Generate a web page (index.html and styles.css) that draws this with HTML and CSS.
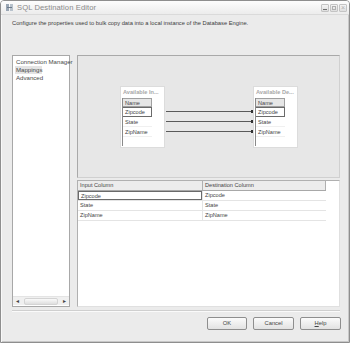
FILE: index.html
```html
<!DOCTYPE html>
<html>
<head>
<meta charset="utf-8">
<link rel="stylesheet" href="styles.css">
</head>
<body>
<div class="window">
  <div class="titlebar">
    <svg class="appicon" width="9" height="9" viewBox="0 0 9 9">
      <rect x="1" y="1" width="3" height="7" fill="#9aa6b4"/>
      <rect x="5" y="1" width="3" height="7" fill="#b8c2cc"/>
      <path d="M2 4.5h5" stroke="#6b7a8a" stroke-width="1"/>
    </svg>
    <span class="title">SQL Destination Editor</span>
    <div class="ctrls">
      <span class="ctrl"><i class="min"></i></span>
      <span class="ctrl"><i class="max"></i></span>
      <span class="ctrl x">×</span>
    </div>
  </div>
  <div class="desc">Configure the properties used to bulk copy data into a local instance of the Database Engine.</div>
  <div class="main">
    <div class="nav">
      <div class="navlist">
        <div class="navitem">Connection Manager</div>
        <div class="navitem sel">Mappings</div>
        <div class="navitem">Advanced</div>
      </div>
      <div class="hscroll">
        <span class="sbtn">&#9666;</span>
        <span class="strack"><span class="thumb"></span></span>
        <span class="sbtn">&#9656;</span>
      </div>
    </div>
    <div class="content">
      <div class="diagram">
        <div class="tbox">
          <div class="tname">Available In...</div>
          <div class="tlist">
            <div class="thead">Name</div>
            <div class="trow cur">Zipcode</div>
            <div class="trow">State</div>
            <div class="trow">ZipName</div>
          </div>
        </div>
        <div class="links">
          <div class="arrow"></div>
          <div class="arrow"></div>
          <div class="arrow"></div>
        </div>
        <div class="tbox">
          <div class="tname">Available De...</div>
          <div class="tlist">
            <div class="thead">Name</div>
            <div class="trow cur">Zipcode</div>
            <div class="trow">State</div>
            <div class="trow">ZipName</div>
          </div>
        </div>
      </div>
      <div class="grid">
        <div class="grow ghead">
          <div class="gcell">Input Column</div>
          <div class="gcell">Destination Column</div>
        </div>
        <div class="grow">
          <div class="gcell cur">Zipcode</div>
          <div class="gcell">Zipcode</div>
        </div>
        <div class="grow">
          <div class="gcell">State</div>
          <div class="gcell">State</div>
        </div>
        <div class="grow">
          <div class="gcell">ZipName</div>
          <div class="gcell">ZipName</div>
        </div>
      </div>
    </div>
  </div>
  <div class="sep"></div>
  <div class="buttons">
    <div class="btn">OK</div>
    <div class="btn">Cancel</div>
    <div class="btn"><u>H</u>elp</div>
  </div>
</div>
</body>
</html>
```
FILE: styles.css
```css
* { box-sizing: border-box; }
html, body { margin: 0; padding: 0; background: #ffffff; }
body {
  font-family: "Liberation Sans", Arial, sans-serif;
  color: #444;
  width: 350px;
  height: 343px;
  overflow: hidden;
}
.window {
  width: 350px;
  height: 343px;
  border: 1px solid #8e8e8e;
  border-radius: 4px 4px 0 0;
  background: #ebebeb;
  display: flex;
  flex-direction: column;
  box-shadow: inset 1px 1px 0 #f8f8f8, inset -1px -1px 0 #c8c8c8;
}
.titlebar {
  height: 14px;
  display: flex;
  align-items: center;
  padding: 0 2px 0 4px;
  background: linear-gradient(#fdfdfd, #ececec);
  border-bottom: 1px solid #dadada;
  border-radius: 3px 3px 0 0;
}
.appicon { display: block; margin-right: 3px; }
.title {
  font-size: 7.6px;
  color: #8a8a8a;
  letter-spacing: 0.1px;
}
.ctrls { margin-left: auto; display: flex; gap: 1px; }
.ctrl {
  width: 8px;
  height: 8px;
  border: 1px solid #c4c4c4;
  border-radius: 1px;
  background: linear-gradient(#f4f4f4, #dedede);
  display: flex;
  align-items: center;
  justify-content: center;
  font-size: 7px;
  line-height: 1;
  color: #b0b0b0;
}
.ctrl .min { display: block; width: 4px; height: 1px; background: #707070; margin-top: 3px; }
.ctrl .max { display: block; width: 4px; height: 4px; border: 1px solid #b0b0b0; }
.desc {
  height: 40px;
  padding: 5px 0 0 11px;
  font-size: 5.75px;
  color: #3c3c3c;
}
.main {
  height: 252px;
  display: flex;
  gap: 7px;
  padding: 0 9px 0 11px;
}
.nav {
  width: 58px;
  border: 1px solid #a8a8a8;
  background: #ffffff;
  display: flex;
  flex-direction: column;
}
.navlist { flex: 1; padding: 2px 0 0 2px; }
.navitem {
  font-size: 6.1px;
  height: 8px;
  line-height: 8px;
  padding-left: 1px;
  color: #4a4a4a;
  white-space: nowrap;
}
.navitem.sel { background: #e4e4e4; width: 27px; }
.hscroll {
  height: 9px;
  margin: 0 0 1px 0;
  display: flex;
  align-items: center;
  background: #f0f0f0;
  border-top: 1px solid #e4e4e4;
}
.sbtn {
  width: 9px;
  height: 8px;
  font-size: 6px;
  line-height: 8px;
  text-align: center;
  color: #444;
}
.strack { flex: 1; height: 7px; display: flex; justify-content: center; align-items: center; }
.thumb { width: 34px; height: 7px; background: linear-gradient(#fafafa, #dedede); border: 1px solid #d4d4d4; border-radius: 2px; }
.content {
  flex: 1;
  display: flex;
  flex-direction: column;
  gap: 2px;
}
.diagram {
  height: 123px;
  background: #e7e7e7;
  border: 1px solid #a9a9a9;
  border-right-color: #d0d0d0;
  border-bottom-color: #d0d0d0;
  display: flex;
  align-items: flex-start;
  padding: 30px 41px 0 42px;
}
.tbox {
  width: 45px;
  height: 62px;
  background: #ffffff;
  border: 1px solid #dcdcdc;
  display: flex;
  flex-direction: column;
  padding: 0 0 1px 1px;
}
.tname {
  height: 11px;
  line-height: 11px;
  font-size: 5.6px;
  font-weight: bold;
  color: #a8a8a8;
  white-space: nowrap;
  overflow: hidden;
  padding-left: 1px;
}
.tlist {
  flex: 1;
  border-left: 1px solid #8a8a8a;
  padding-right: 12px;
}
.thead {
  height: 9px;
  line-height: 8px;
  font-size: 5.6px;
  background: #e6e6e6;
  border: 1px solid #a0a0a0;
  border-left: none;
  padding-left: 2px;
}
.trow {
  height: 10px;
  line-height: 10px;
  font-size: 5.6px;
  padding-left: 2px;
  border-bottom: 1px solid #f0f0f0;
}
.trow.cur { border: 1px solid #6a6a6a; border-left: none; line-height: 8px; }
.links {
  flex: 1;
  padding-top: 25px;
  display: flex;
  flex-direction: column;
  gap: 9px;
}
.arrow {
  height: 1px;
  background: #5a5a5a;
  margin: 0 0 0 1px;
  position: relative;
}
.arrow::after {
  content: "";
  position: absolute;
  right: 0;
  top: -1px;
  width: 2px;
  height: 3px;
  background: #333;
}
.grid {
  flex: 1;
  background: #ffffff;
  border: 1px solid #b0b0b0;
  border-right-color: #e0e0e0;
  border-bottom-color: #e0e0e0;
  padding-right: 13px;
}
.grow {
  display: flex;
  height: 10px;
  border-bottom: 1px solid #e4e4e4;
}
.ghead {
  height: 10px;
  background: #ececec;
  border-bottom: 1px solid #a8a8a8;
}
.gcell {
  width: 124px;
  font-size: 5.6px;
  line-height: 9px;
  padding-left: 2px;
  color: #444;
}
.gcell + .gcell { border-left: 1px solid #e4e4e4; }
.ghead .gcell + .gcell { border-left: 1px solid #b0b0b0; border-right: 1px solid #b0b0b0; }
.gcell.cur { border: 1px solid #6a6a6a; line-height: 8px; }
.sep {
  margin: 3px 9px 0 11px;
  height: 2px;
  border-top: 1px solid #cfcfcf;
  border-bottom: 1px solid #fafafa;
}
.buttons {
  display: flex;
  justify-content: flex-end;
  gap: 6px;
  padding: 5px 8px 0 0;
}
.btn {
  width: 40px;
  height: 13px;
  border: 1px solid #8e8e8e;
  border-radius: 2px;
  background: linear-gradient(#fbfbfb, #e2e2e2);
  font-size: 5.8px;
  line-height: 11px;
  text-align: center;
  color: #444;
}
.btn + .btn { width: 41px; }
```
